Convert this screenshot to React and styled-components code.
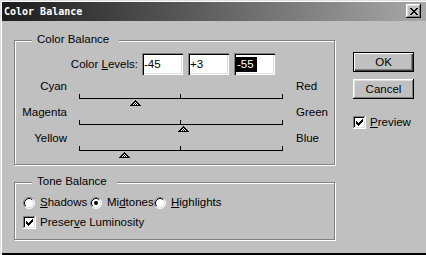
import React from 'react';
import styled, { createGlobalStyle } from 'styled-components';

const GlobalStyle = createGlobalStyle`
  html, body {
    margin: 0;
    padding: 0;
    background: #c0c0c0;
  }
  body {
    font-family: "Liberation Sans", Arial, sans-serif;
    font-size: 11.5px;
    color: #000;
  }
  * {
    box-sizing: border-box;
  }
`;

const Window = styled.div`
  width: 426px;
  height: 255px;
  display: flex;
  flex-direction: column;
  padding: 2px 0 2px 2px;
  background: #c0c0c0;
  box-shadow: inset 1px 1px 0 #dfdfdf, inset 2px 2px 0 #fff, inset 0 -2px 0 #000;
  overflow: hidden;
`;

const TitleBar = styled.div`
  display: flex;
  align-items: flex-start;
  justify-content: space-between;
  height: 19px;
  padding: 0 5px 0 2px;
  background: linear-gradient(90deg, #1c1c1c, #a8a8a8);
`;

const Title = styled.span`
  font-family: "DejaVu Sans Mono", "Liberation Mono", monospace;
  font-size: 10px;
  font-weight: bold;
  line-height: 19px;
  color: #fff;
`;

const CloseButton = styled.div`
  display: flex;
  align-items: center;
  justify-content: center;
  width: 15px;
  height: 14px;
  margin-top: 2px;
  background: #c0c0c0;
  box-shadow: inset -1px -1px 0 #000, inset 1px 1px 0 #fff, inset -2px -2px 0 #808080, inset 2px 2px 0 #dfdfdf;
`;

const Body = styled.div`
  display: flex;
  padding: 19px 0 0 12px;
`;

const MainColumn = styled.div`
  display: flex;
  flex-direction: column;
  width: 321px;
`;

const SideColumn = styled.div`
  display: flex;
  flex-direction: column;
  width: 61px;
  margin-left: 18px;
  padding-top: 12px;
`;

const GroupBox = styled.div`
  display: flex;
  flex-direction: column;
  width: 321px;
  border: 1px solid #808080;
  box-shadow: inset 1px 1px 0 #fff, 1px 1px 0 #fff;
  padding-bottom: ${p => p.$bottom}px;
  margin-bottom: ${p => p.$gap || 0}px;
`;

const Legend = styled.span`
  align-self: flex-start;
  height: 13px;
  line-height: 13px;
  margin: -8px 0 -5px 17px;
  padding: 0 10px 0 5px;
  background: #c0c0c0;
  white-space: nowrap;
`;

const Key = styled.span`
  text-decoration: underline;
  text-underline-offset: 1px;
`;

const LevelsRow = styled.div`
  display: flex;
  align-items: center;
  height: 22px;
  margin-top: 12px;
`;

const LevelsLabel = styled.span`
  width: 123px;
  margin-right: 4px;
  text-align: right;
`;

const Field = styled.div`
  display: flex;
  align-items: center;
  width: 41px;
  height: 22px;
  margin-right: 5px;
  padding-left: 2px;
  background: #fff;
  box-shadow: inset 1px 1px 0 #808080, inset 2px 2px 0 #000, inset -1px -1px 0 #fff, inset -2px -2px 0 #dfdfdf;
`;

const Selected = styled.span`
  display: inline-block;
  line-height: 15px;
  padding: 0 3px 0 1px;
  background: #000;
  color: #fff;
`;

const SliderGrid = styled.div`
  display: grid;
  grid-template-columns: 64px 204px auto;
  grid-auto-rows: 26px;
  margin-top: 5px;
`;

const SideLabel = styled.span`
  line-height: 13px;
  text-align: ${p => (p.$right ? 'left' : 'right')};
  padding: ${p => (p.$right ? '0 0 0 13px' : '0 12px 0 0')};
`;

const Track = styled.div`
  position: relative;
  height: 5px;
  margin-top: 14px;
  border: 1px solid #000;
  border-top: none;

  &::after {
    content: '';
    position: absolute;
    left: calc(50% - 1px);
    top: 0;
    width: 1px;
    height: 4px;
    background: #000;
  }
`;

const Marker = styled.svg`
  position: absolute;
  top: 6px;
`;

const RadioRow = styled.div`
  display: flex;
  align-items: center;
  height: 13px;
  margin: 13px 0 0 8px;
`;

const RadioItem = styled.label`
  display: flex;
  align-items: center;
  gap: 5px;
  width: ${p => (p.$w ? `${p.$w}px` : 'auto')};
  line-height: 13px;
  white-space: nowrap;
`;

const CheckRow = styled.label`
  display: flex;
  align-items: center;
  gap: 4px;
  height: 13px;
  line-height: 13px;
  margin-top: ${p => p.$top || 0}px;
  margin-left: ${p => p.$left || 0}px;
  white-space: nowrap;
`;

const Button = styled.button`
  width: 61px;
  height: 20px;
  margin: 0 0 ${p => p.$gap || 0}px;
  padding: 0;
  font: inherit;
  color: #000;
  background: #c0c0c0;
  border: ${p => (p.$default ? '1px solid #000' : 'none')};
  box-shadow: ${p =>
    p.$default
      ? 'inset 1px 1px 0 #fff, inset -1px -1px 0 #404040, inset -2px -2px 0 #808080'
      : 'inset -1px -1px 0 #000, inset 1px 1px 0 #fff, inset -2px -2px 0 #808080, inset 2px 2px 0 #dfdfdf'};
`;

const CloseGlyph = () => {
  const rows = ['11000011', '01100110', '00111100', '00011000', '00111100', '01100110', '11000011'];
  return (
    <svg width="8" height="7" viewBox="0 0 8 7" shapeRendering="crispEdges">
      {rows.map((r, y) =>
        r.split('').map((c, x) => (c === '1' ? <rect key={`${x}-${y}`} x={x} y={y} width="1" height="1" fill="#000" /> : null))
      )}
    </svg>
  );
};

const MarkerIcon = ({ left }) => {
  const px = [];
  for (let y = 0; y < 6; y++) {
    for (let x = 0; x < 11; x++) {
      const d = Math.abs(x - 5);
      if (d > y) continue;
      const edge = d === y || y === 5;
      const fill = edge || (x + y) % 2 === 0 ? '#000' : '#fff';
      px.push(<rect key={`${x}-${y}`} x={x} y={y} width="1" height="1" fill={fill} />);
    }
  }
  return (
    <Marker width="11" height="6" viewBox="0 0 11 6" shapeRendering="crispEdges" style={{ left }}>
      {px}
    </Marker>
  );
};

const CheckBox = () => (
  <svg width="13" height="13" viewBox="0 0 13 13" shapeRendering="crispEdges">
    <rect width="13" height="13" fill="#fff" />
    <path d="M0 0h12v1H1v11H0z" fill="#808080" />
    <path d="M1 1h10v1H2v9H1z" fill="#000" />
    <path d="M12 0h1v13H0v-1h12z" fill="#fff" />
    <path d="M11 1h1v11H1v-1h10z" fill="#dfdfdf" />
    {[5, 6, 7, 6, 5, 4, 3].map((top, i) => (
      <rect key={i} x={3 + i} y={top} width="1" height="3" fill="#000" />
    ))}
  </svg>
);

const Radio = ({ checked }) => (
  <svg width="12" height="12" viewBox="0 0 12 12">
    <circle cx="6" cy="6" r="5" fill="#fff" />
    <path d="M2.11 9.89A5.5 5.5 0 0 1 9.89 2.11" fill="none" stroke="#808080" />
    <path d="M9.89 2.11A5.5 5.5 0 0 1 2.11 9.89" fill="none" stroke="#fff" />
    <path d="M2.82 9.18A4.5 4.5 0 0 1 9.18 2.82" fill="none" stroke="#000" />
    <path d="M9.18 2.82A4.5 4.5 0 0 1 2.82 9.18" fill="none" stroke="#dfdfdf" />
    {checked && <circle cx="6" cy="6" r="2" fill="#000" />}
  </svg>
);

const sliders = [
  { left: 'Cyan', right: 'Red', value: -45 },
  { left: 'Magenta', right: 'Green', value: 3 },
  { left: 'Yellow', right: 'Blue', value: -55 },
];

const App = () => {
  return (
    <Window>
      <GlobalStyle />
      <TitleBar>
        <Title>Color Balance</Title>
        <CloseButton>
          <CloseGlyph />
        </CloseButton>
      </TitleBar>
      <Body>
        <MainColumn>
          <GroupBox $bottom={6} $gap={17}>
            <Legend>Color Balance</Legend>
            <LevelsRow>
              <LevelsLabel>
                Color <Key>L</Key>evels:
              </LevelsLabel>
              <Field>-45</Field>
              <Field>+3</Field>
              <Field>
                <Selected>-55</Selected>
              </Field>
            </LevelsRow>
            <SliderGrid>
              {sliders.map(s => (
                <React.Fragment key={s.left}>
                  <SideLabel>{s.left}</SideLabel>
                  <div>
                    <Track>
                      <MarkerIcon left={Math.round(((s.value + 100) / 200) * 202) - 6} />
                    </Track>
                  </div>
                  <SideLabel $right>{s.right}</SideLabel>
                </React.Fragment>
              ))}
            </SliderGrid>
          </GroupBox>
          <GroupBox $bottom={10}>
            <Legend>Tone Balance</Legend>
            <RadioRow>
              <RadioItem $w={67}>
                <Radio />
                <span>
                  <Key>S</Key>hadows
                </span>
              </RadioItem>
              <RadioItem $w={64}>
                <Radio checked />
                <span>
                  Mi<Key>d</Key>tones
                </span>
              </RadioItem>
              <RadioItem>
                <Radio />
                <span>
                  <Key>H</Key>ighlights
                </span>
              </RadioItem>
            </RadioRow>
            <CheckRow $top={7} $left={8}>
              <CheckBox />
              <span>
                Preser<Key>v</Key>e Luminosity
              </span>
            </CheckRow>
          </GroupBox>
        </MainColumn>
        <SideColumn>
          <Button $default $gap={7}>OK</Button>
          <Button>Cancel</Button>
          <CheckRow $top={17}>
            <CheckBox />
            <span>
              <Key>P</Key>review
            </span>
          </CheckRow>
        </SideColumn>
      </Body>
    </Window>
  );
};

export default App;
